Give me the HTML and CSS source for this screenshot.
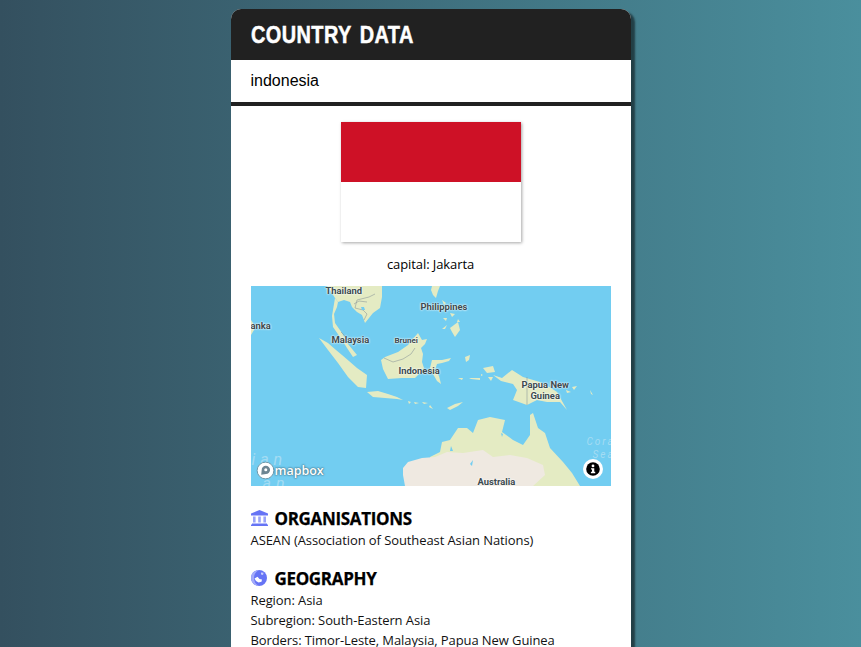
FILE: index.html
```html
<!DOCTYPE html>
<html>
<head>
<meta charset="utf-8" />
<title>Country Data</title>
<link rel="stylesheet" href="styles.css">
</head>
<body>
<div class="card">
	<h1 class="title"><span class="title-text">COUNTRY DATA</span></h1>
	<div class="search">indonesia</div>
	<div class="content">
		<div class="flag"></div>
		<p class="capital">capital: Jakarta</p>
		<div class="map">
			<svg class="land" viewBox="0 0 360 200" width="360" height="200">
				<rect width="360" height="200" fill="#72cdf1"/>
				<g fill="#e4ebc3">
					<!-- mainland asia -->
					<path d="M76 0 L131 0 L131 11 L129 22 L122 27 L114 37 L111 29 L106 26 L101 21 L99 16 L93 14 L87 16 L84 12 L79 4 Z"/>
					<!-- malay peninsula -->
					<path d="M84 12 L87 16 L86 21 L83 28 L84 37 L91 47 L97 58 L106 69 L102 71 L96 62 L91 54 L82 41 L81 30 Z"/>
					<!-- sri lanka -->
					<path d="M0 34 L2 37 L3 44 L0 49 Z"/>
					<!-- sumatra -->
					<path d="M68 52 L77 57 L85 64 L91 69 L98 75 L106 82 L116 89 L115 102 L107 101 L97 91 L87 77 L77 64 Z"/>
					<!-- borneo -->
					<path d="M167 47 L171 54 L176 53 L174 58 L170 62 L172 68 L171 76 L173 82 L168 88 L164 92 L151 92 L137 93 L132 83 L130 74 L134 71 L147 66 L157 59 L161 54 Z"/>
					<!-- sulawesi -->
					<path d="M181 74 L191 74 L200 72 L198 75 L191 77 L186 78 L184 84 L188 90 L190 98 L186 95 L182 88 L179 82 Z"/>
					<!-- philippines -->
					<path d="M181 0 L189 0 L187 5 L185 12 L182 9 L180 4 Z"/>
					<path d="M199 42 L207 36 L209 44 L204 51 L201 46 Z"/>
					<path d="M191 43 L196 39 L194 43 Z M192 32 L196 32 L195 35 Z M199 27 L204 28 L201 31 Z M191 14 L195 17 L193 19 Z M197 20 L201 22 L198 23 Z M207 33 L209 36 L206 36 Z"/>
					<!-- java and lesser sunda -->
					<path d="M116 106 L127 105 L137 108 L146 111 L152 114 L146 113 L134 112 L122 111 Z"/>
					<path d="M157 115 L160 116 L158 118 Z M163 116 L168 117 L164 118 Z M171 116 L177 117 L173 118 Z M179 119 L182 123 L178 121 Z"/>
					<path d="M196 122 L204 118 L212 116 L207 120 L199 124 Z"/>
					<!-- moluccas -->
					<path d="M214 71 L219 69 L218 74 L215 76 Z M232 82 L242 80 L244 86 L236 87 Z M237 91 L242 91 L240 95 Z"/>
					<path d="M207 92 L212 92 L211 94 Z M218 92 L229 92 L229 94 L220 93 Z"/>
					<path d="M230 88 L232 89 L230 90 Z"/>
					<!-- new guinea -->
					<path d="M242 89 L251 92 L261 84 L272 91 L289 96 L300 102 L306 106 L316 124 L309 116 L296 116 L286 114 L276 119 L262 114 L266 104 L262 98 L250 95 Z"/>
					<path d="M321 101 L326 100 L323 104 Z M339 104 L342 109 L340 108 Z M315 104 L320 106 L316 107 Z"/>
					<!-- australia -->
					<path d="M179 200 L179 171 L189 166 L191 156 L199 154 L207 142 L216 142 L222 147 L227 134 L239 131 L254 134 L251 146 L262 154 L272 159 L279 149 L279 129 L282 127 L287 142 L294 147 L299 162 L312 176 L321 187 L329 200 Z"/>
				</g>
				<!-- desert interior -->
				<path d="M154 200 L152 189 L152 182 L157 176 L171 172 L184 171 L196 166 L212 167 L232 164 L242 171 L259 169 L276 172 L292 179 L294 189 L282 200 Z" fill="#efe9e1"/>
				<path d="M200 160 L202 165 L199 165 Z M219 178 L222 174 L221 180 Z M250 147 L252 148 L251 151 Z" fill="#72cdf1"/>
				<g fill="none" stroke="#8e9a9b" stroke-width="0.6">
					<path d="M124 8 L118 11 L106 14 L104 22 L112 24 L116 28 L113 34"/>
					<path d="M103 18 L108 15 L116 16"/>
					<path d="M90 46 L94 50 L99 56"/>
					<path d="M133 72 L142 76 L152 73 L160 68 L164 62"/>
					<path d="M276 91 L276 119"/>
				</g>
				<path d="M110 21 L113 21 L114 24 L111 24 Z" fill="#72cdf1"/>
			</svg>
			<span class="place t-thailand">Thailand</span>
			<span class="place t-philippines">Philippines</span>
			<span class="place t-lanka">anka</span>
			<span class="place t-malaysia">Malaysia</span>
			<span class="place t-brunei">Brunei</span>
			<span class="place t-indonesia">Indonesia</span>
			<span class="place t-papua">Papua New<br>Guinea</span>
			<span class="place t-australia">Australia</span>
			<span class="sea t-indian">i a n</span>
			<span class="sea t-indian2">a n</span>
			<span class="sea t-coral">Cora<br>Sea</span>
			<div class="logo">
				<svg viewBox="0 0 20 20" width="19" height="19">
					<circle cx="10" cy="10" r="8.8" fill="#fff" stroke="#6d95a6" stroke-width="1"/>
					<path d="M5.5 14.5 L6 9.5 A4.4 4.4 0 1 1 10.5 13.8 Z" fill="#6d8592"/>
					<circle cx="10.3" cy="9.3" r="1.6" fill="#fff"/>
				</svg>
				<span class="logo-text">mapbox</span>
			</div>
			<div class="info">
				<svg viewBox="0 0 20 20" width="14" height="14">
					<circle cx="10" cy="10" r="9.7" fill="#000"/>
					<circle cx="10" cy="5.6" r="2" fill="#fff"/>
					<path d="M7.2 8.8 H11.8 V14 H13.2 V16 H7 V14 H8.6 V10.8 H7.2 Z" fill="#fff"/>
				</svg>
			</div>
		</div>
		<section class="block">
			<h2 class="block-title">
				<svg viewBox="0 0 17 16" width="17" height="16">
					<path d="M8.5 0 L17 3.6 V5.6 H0 V3.6 Z" fill="#6674f5"/>
					<path d="M2 6.6 H4.6 V12.6 H2 Z M7.2 6.6 H9.8 V12.6 H7.2 Z M12.4 6.6 H15 V12.6 H12.4 Z" fill="#9aa3f8"/>
					<path d="M1 13.4 H16 V14.4 H17 V16 H0 V14.4 H1 Z" fill="#6674f5"/>
				</svg>
				ORGANISATIONS
			</h2>
			<p>ASEAN (Association of Southeast Asian Nations)</p>
		</section>
		<section class="block">
			<h2 class="block-title">
				<svg viewBox="0 0 17 16" width="17" height="16">
					<circle cx="8" cy="8" r="8" fill="#6674f5"/>
					<path d="M8 0 A8 8 0 0 0 8 16 A9 9 0 0 1 3 8 A9 9 0 0 1 8 0 Z" fill="#a3abfa"/>
					<path d="M3.5 8.5 L6.5 6.8 L8.5 9 L11 9.6 L10.5 11.8 L7.5 12.6 L5 11 Z" fill="#fff"/>
					<path d="M10 2.4 L12.6 2.8 L12 5 L10 4.4 Z" fill="#c9cefc"/>
				</svg>
				GEOGRAPHY
			</h2>
			<p>Region: Asia</p>
			<p>Subregion: South-Eastern Asia</p>
			<p>Borders: Timor-Leste, Malaysia, Papua New Guinea</p>
		</section>
	</div>
</div>
</body>
</html>
```

FILE: styles.css
```css
*{ margin:0; padding:0; box-sizing:border-box;}
html,body{ height:100%; overflow:hidden;}
body{ background:linear-gradient(to right,#34505f,#4a8f9d); font-family:"Open Sans",sans-serif; color:#000; padding-top:9px;}
.card{ width:400px; margin:0 auto; background:#fff; border-radius:10px 10px 0 0; box-shadow:4px 3px 2px rgba(0,0,0,0.5);}
.title{ height:51px; padding-left:20px; background:#212121; color:#fff; border-radius:10px 10px 0 0; font:bold 24px/52px "Liberation Sans",sans-serif; letter-spacing:0.5px; word-spacing:3px; -webkit-text-stroke:0.5px #fff;}
.title-text{ display:inline-block; transform:scaleX(0.83); transform-origin:left center;}
.search{ height:46px; padding-left:20px; border-bottom:4px solid #212121; font:16px/41px "Liberation Sans",sans-serif; color:#000;}
.content{ padding:16px 20px 0;}
.flag{ width:180px; height:120px; margin:0 auto; background:linear-gradient(#ce1126 50%,#fff 50%); box-shadow:1px 1px 3px rgba(0,0,0,0.35);}
.capital{ margin-top:12px; text-align:center; font-size:13px; line-height:20px; letter-spacing:-0.09px;}
.map{ position:relative; width:360px; height:200px; margin-top:12px; overflow:hidden;}
.land{ display:block;}
.place{ position:absolute; font:bold 9.4px/11px Roboto,sans-serif; color:#3c4a4f; text-align:center; white-space:nowrap; text-shadow:0 0 2px #fff,0 0 2px #fff;}
.t-thailand{ left:75px; top:-1px;}
.t-philippines{ left:170px; top:15px;}
.t-lanka{ left:0; top:34px;}
.t-malaysia{ left:81px; top:48px;}
.t-brunei{ left:144px; top:49px; font-size:8px;}
.t-indonesia{ left:148px; top:79px;}
.t-papua{ left:271px; top:93px;}
.t-australia{ left:227px; top:190px;}
.sea{ position:absolute; font:italic 10px/13px Roboto,sans-serif; color:#a4dcf3; letter-spacing:2px; text-align:right;}
.t-indian{ left:1px; top:164px; font-size:16px; line-height:20px; letter-spacing:0.5px;}
.t-indian2{ left:12px; top:188px; font-size:16px; line-height:20px; letter-spacing:0.5px;}
.t-coral{ left:336px; top:149px;}
.logo{ position:absolute; left:5px; bottom:6px; display:flex; align-items:center; gap:0;}
.logo-text{ font:600 12.5px/16px "Open Sans",sans-serif; color:#fff; text-shadow:0 0 2px #4a7f92,0 0 2px #4a7f92,0 0 1px #4a7f92;}
.info{ position:absolute; right:8px; bottom:7px; width:20px; height:20px; border-radius:50%; background:#fff; display:flex; align-items:center; justify-content:center;}
.block{ margin-top:21px;}
.block + .block{ margin-top:17px;}
.block-title{ display:flex; align-items:center; gap:7px; margin-bottom:-1px; font-size:17px; line-height:24px; font-weight:700; letter-spacing:-0.33px; -webkit-text-stroke:0.25px #000;}
.block-title svg{ margin-top:-2px;}
.block p{ font-size:13px; line-height:20px; letter-spacing:-0.09px; color:#111;}
```
